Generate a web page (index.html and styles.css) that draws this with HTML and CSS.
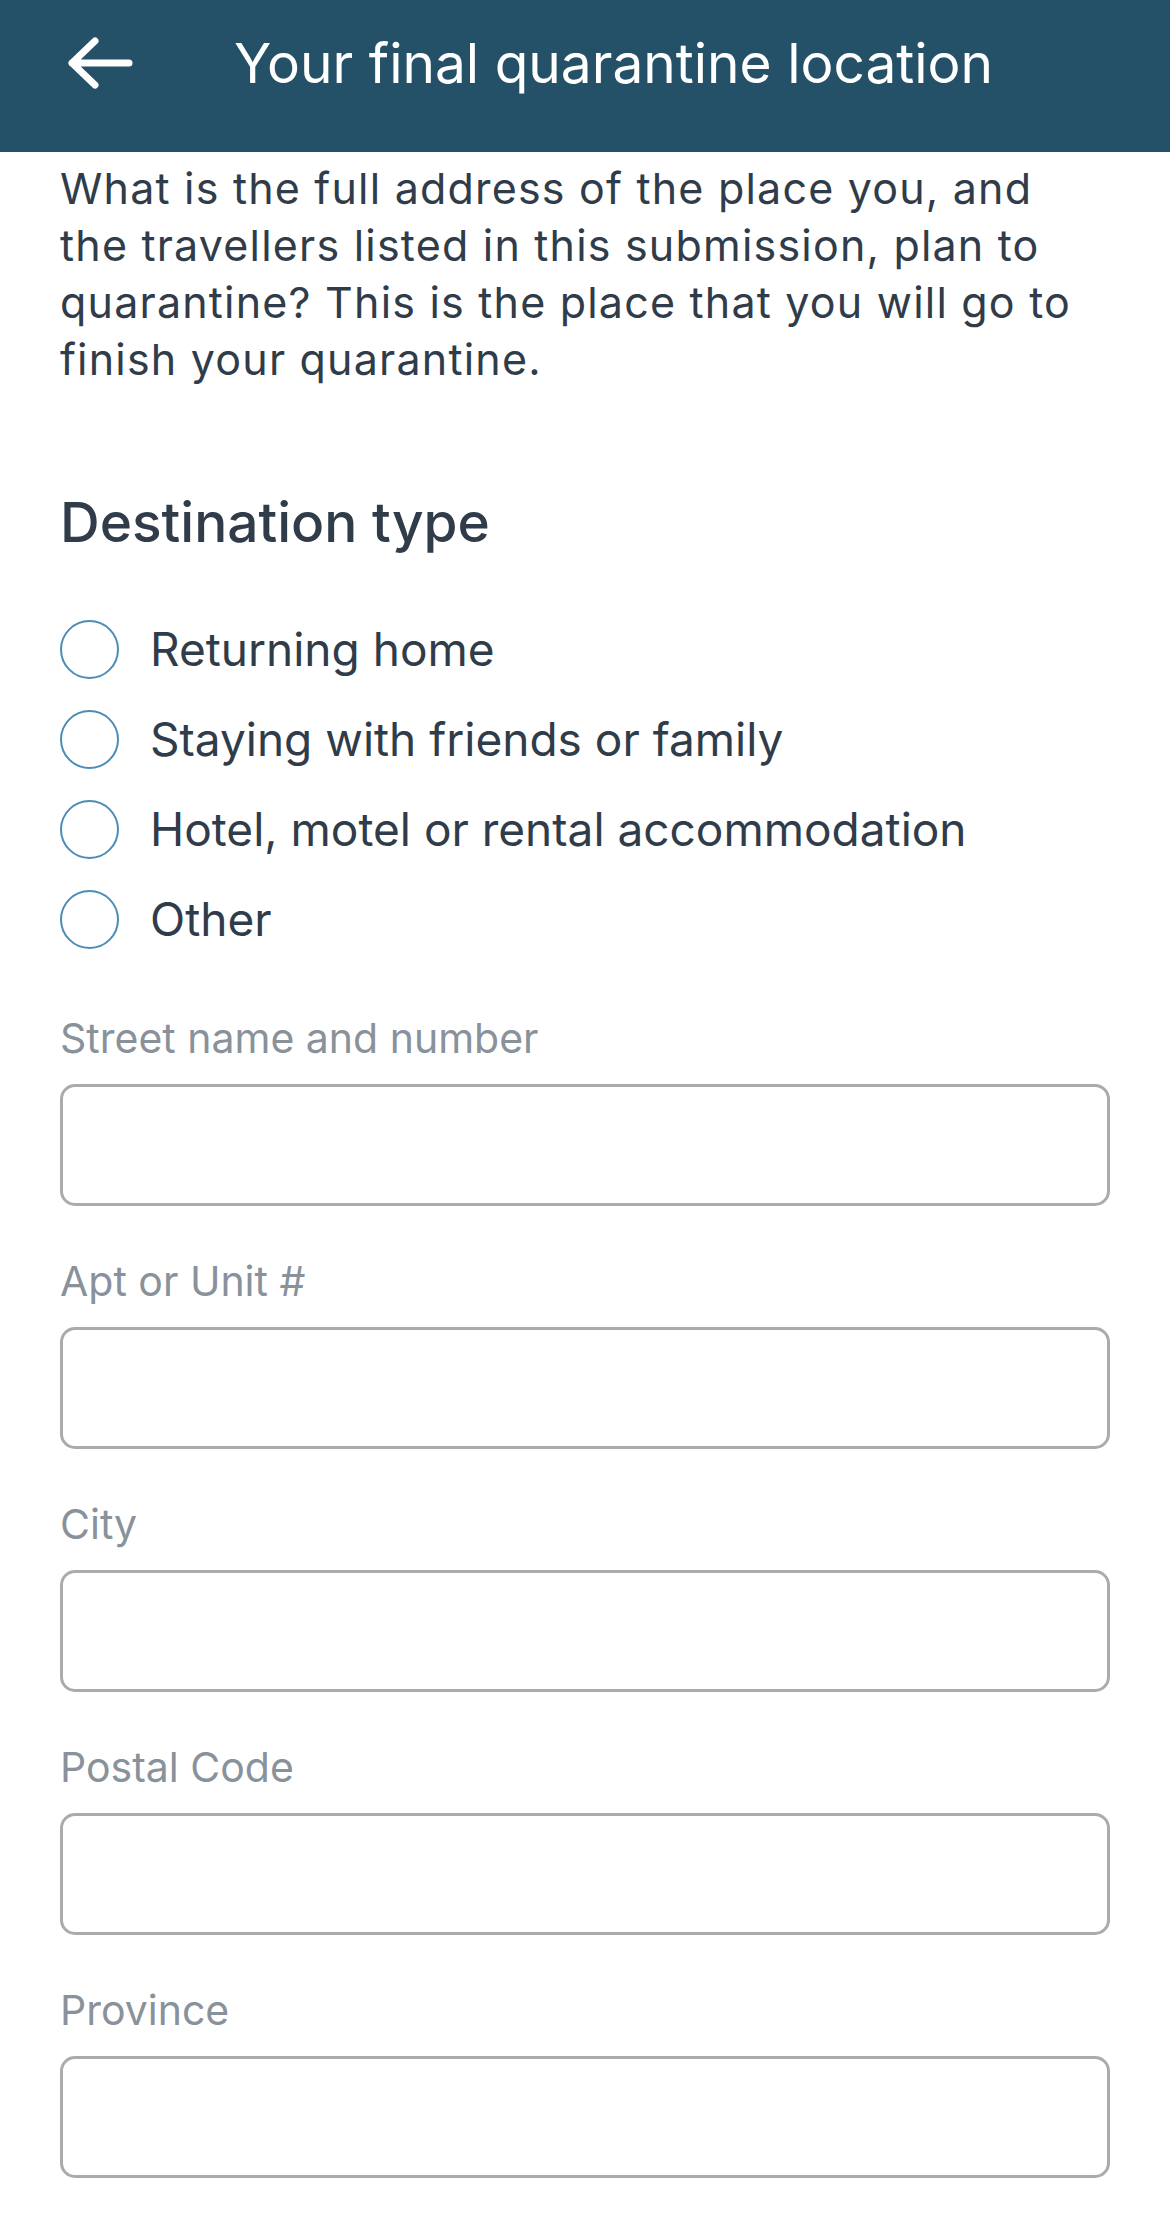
FILE: index.html
```html
<!DOCTYPE html>
<html lang="en">
<head>
    <meta charset="UTF-8">
    <meta name="viewport" content="width=device-width, initial-scale=1.0">
    <title>Your final quarantine location</title>
    <link rel="stylesheet" href="styles.css">
</head>
<body>
    <header class="top-bar">
        <div class="top-bar-row">
            <svg class="back-arrow" width="70" height="62" viewBox="0 0 70 62">
                <path d="M62 31 H5 M28 9 L5 31 L28 53" fill="none" stroke="#ffffff" stroke-width="7" stroke-linecap="round" stroke-linejoin="round"/>
            </svg>
            <h1 class="page-title">Your final quarantine location</h1>
        </div>
    </header>

    <form class="content">
        <p class="intro">What is the full address of the place you, and the travellers listed in this submission, plan to quarantine? This is the place that you will go to finish your quarantine.</p>

        <h2 class="section-title">Destination type</h2>

        <div class="radio-list">
            <label class="radio-row">
                <input type="radio" name="destination" value="home">
                <span>Returning home</span>
            </label>
            <label class="radio-row">
                <input type="radio" name="destination" value="friends">
                <span>Staying with friends or family</span>
            </label>
            <label class="radio-row">
                <input type="radio" name="destination" value="hotel">
                <span>Hotel, motel or rental accommodation</span>
            </label>
            <label class="radio-row">
                <input type="radio" name="destination" value="other">
                <span>Other</span>
            </label>
        </div>

        <div class="field">
            <label for="street">Street name and number</label>
            <input type="text" id="street" name="street">
        </div>
        <div class="field">
            <label for="apt">Apt or Unit #</label>
            <input type="text" id="apt" name="apt">
        </div>
        <div class="field">
            <label for="city">City</label>
            <input type="text" id="city" name="city">
        </div>
        <div class="field">
            <label for="postal">Postal Code</label>
            <input type="text" id="postal" name="postal">
        </div>
        <div class="field">
            <label for="province">Province</label>
            <input type="text" id="province" name="province">
        </div>
    </form>
</body>
</html>
```

FILE: styles.css
```css
body {
    margin: 0;
    font-family: Inter, "Noto Sans", sans-serif;
    background-color: #ffffff;
    color: #303c49;
}

.top-bar {
    background-color: #245168;
    padding: 0 0 26px 67px;
}

.top-bar-row {
    display: flex;
    align-items: center;
    height: 126px;
}

.back-arrow {
    flex-shrink: 0;
}

.page-title {
    margin: 0 0 0 97px;
    font-size: 55px;
    font-weight: 400;
    color: #ffffff;
    line-height: 70px;
}

.content {
    padding: 8px 60px 40px 60px;
}

.intro {
    margin: 0;
    font-size: 43px;
    letter-spacing: 1.2px;
    line-height: 57px;
}

.section-title {
    margin: 102px 0 0 0;
    font-size: 55px;
    font-weight: 500;
    line-height: 64px;
}

.radio-list {
    margin-top: 50px;
}

.radio-row {
    display: flex;
    align-items: center;
    height: 90px;
    font-size: 46px;
}

.radio-row input {
    appearance: none;
    -webkit-appearance: none;
    margin: 0 31px 0 0;
    width: 59px;
    height: 59px;
    border: 2px solid #4b8cb8;
    border-radius: 50%;
    flex-shrink: 0;
}

.field {
    margin-top: 50px;
}

.field + .field {
    margin-top: 51px;
}

.field label {
    display: block;
    font-size: 41px;
    line-height: 48px;
    color: #89929b;
}

.field input {
    display: block;
    box-sizing: border-box;
    width: 100%;
    height: 122px;
    margin-top: 22px;
    border: 3px solid #ababab;
    border-radius: 15px;
    font-size: 40px;
    padding: 0 20px;
}
```
